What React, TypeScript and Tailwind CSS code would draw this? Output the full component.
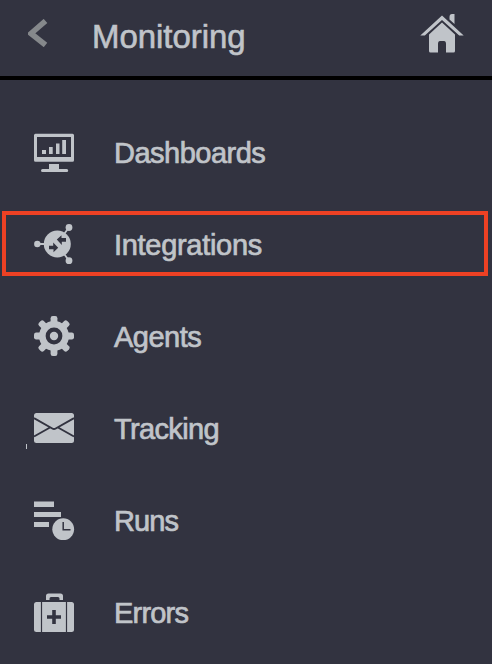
import React from "react";

const ICON = "block h-10 w-10 shrink-0 overflow-visible fill-[#c0c4c9]";
const DARK = "#323340";

function DashboardsIcon() {
  return (
    <svg viewBox="0 0 40 40" className={ICON}>
      <path fillRule="evenodd" d="M1.5 .7h37a1.5 1.5 0 0 1 1.5 1.5v25a1.5 1.5 0 0 1-1.5 1.5h-37A1.5 1.5 0 0 1 0 27.200v-25A1.500 1.500 0 0 1 1.500.7ZM3 4v20h34V4Z" />
      <path d="M8 17h4v4H8zM15 14h3.700v7H15zM22 10.500h3.500V21H22zM28.200 7H32v14h-3.800zM15 31h10v5h7.700a1.500 1.500 0 0 1 0 3H8.500a1.500 1.500 0 0 1 0-3H15z" />
    </svg>
  );
}

function IntegrationsIcon() {
  return (
    <svg viewBox="0 0 40 40" className={ICON}>
      <path d="M3.300 19H23L35 2.300M23 19l12 16.700" fill="none" stroke="#c0c4c9" strokeWidth="1.800" />
      <circle cx="23.300" cy="19" r="13.500" />
      <circle cx="3.300" cy="19" r="3.200" />
      <circle cx="35" cy="2.500" r="3.400" />
      <circle cx="35" cy="35.700" r="3.400" />
      <path fill={DARK} d="M15 20.700h4.200v-3.200l5 5.200-4.700 4.500v-2.900H15zM32 16.700h-4.200v3.300l-5-5.400 4.700-4.400v2.900H32z" />
    </svg>
  );
}

function AgentsIcon() {
  return (
    <svg viewBox="0 1 40 40" className={ICON}>
      {[0, 45, 90, 135].map((angle) => (
        <rect key={angle} x="16.600" y="0" width="6.800" height="40" rx="2.200" transform={`rotate(${angle} 20 20)`} />
      ))}
      <circle cx="20" cy="20" r="15" />
      <circle cx="20" cy="20" r="8.400" fill={DARK} />
      <circle cx="20" cy="20" r="4.200" />
    </svg>
  );
}

function TrackingIcon() {
  return (
    <svg viewBox="0 0 40 40" className={ICON}>
      <rect y="4" width="40" height="30" rx="2.500" />
      <path d="M0 9.200 18.300 19.500q1.700 1 3.400 0L40 9.200M0 27.500l16-9M40 27.500l-16-9" fill="none" stroke={DARK} strokeWidth="1.900" />
    </svg>
  );
}

function RunsIcon() {
  return (
    <svg viewBox="0 0 40 40" className={ICON}>
      <path d="M0 .5h20V6H0zM0 11h27v5H0zM0 21h15v5H0z" />
      <circle cx="29.200" cy="28.200" r="10.900" />
      <path d="M29.200 21v7.800h7.300" fill="none" stroke={DARK} strokeWidth="1.500" />
    </svg>
  );
}

function ErrorsIcon() {
  return (
    <svg viewBox="0 0 40 40" className={ICON}>
      <path d="M12 7V3q0-2.500 2.500-2.500h12Q29 .5 29 3v4h-3.500V5.500q0-1.500-1.500-1.500h-7q-1.500 0-1.500 1.500V7z" />
      <rect y="9" width="40" height="30" rx="2.500" />
      <path d="M7.500 9v30M32.500 9v30" stroke={DARK} strokeWidth="1.200" />
      <path d="M20 17v14M13 24h14" stroke={DARK} strokeWidth="3.600" />
    </svg>
  );
}

const items = [
  { label: "Dashboards", Icon: DashboardsIcon, tracking: "tracking-[-0.5px]" },
  { label: "Integrations", Icon: IntegrationsIcon, tracking: "tracking-[-0.3px]", selected: true },
  { label: "Agents", Icon: AgentsIcon, tracking: "tracking-[-0.5px]" },
  { label: "Tracking", Icon: TrackingIcon, tracking: "tracking-[-0.65px]", tick: true },
  { label: "Runs", Icon: RunsIcon, tracking: "tracking-[-0.9px]" },
  { label: "Errors", Icon: ErrorsIcon, tracking: "tracking-[-0.8px]" },
];

export default function App() {
  return (
    <div className="h-[664px] w-[492px] overflow-hidden bg-[#323340] font-['Liberation_Sans',Arial,sans-serif] text-[#c0c4c9]">
      <header className="flex h-20 items-center border-b-4 border-black pr-7 pl-7">
        <svg viewBox="0 0 20 28" className="-mt-2.5 h-7 w-5 shrink-0">
          <path d="M17.500 2 3 14.500l14.500 11.500" fill="none" stroke="#85888b" strokeWidth="5.600" />
        </svg>
        <h1 className="-mt-0.5 ml-11 grow text-[33px] leading-10 tracking-[-0.05px] [-webkit-text-stroke:0.6px_#c0c4c9]">Monitoring</h1>
        <svg viewBox="0 0 44 40" className="-mt-2 h-10 w-11 shrink-0 fill-[#c0c4c9]">
          <path d="M22 1.500 43.700 21.500h-4.500L22 5.900 4.800 21.500H.3zM29.500 3q0-3 2.500-3h2.500v10l-5-4.500z" />
          <path d="M22 8.500 35 20.500V37q0 1.500-1.500 1.500H26V30q0-3-2-3h-4q-2 0-2 3v8.500h-7.500Q9 38.500 9 37V20.500z" />
        </svg>
      </header>
      <nav className="pt-[27px]">
        {items.map(({ label, Icon, tracking, selected, tick }) => (
          <div key={label} className="relative flex h-[92px] items-center pl-[34px]">
            {selected && <div className="absolute top-3 left-0.5 h-[65px] w-[486px] border-4 border-[#ed4124]" />}
            {tick && <div className="absolute top-[61px] left-[26px] h-[5px] w-px bg-[#c0c4c9]" />}
            <Icon />
            <span className={`ml-10 text-[29px] leading-9 [-webkit-text-stroke:0.7px_#c0c4c9] ${tracking}`}>{label}</span>
          </div>
        ))}
      </nav>
    </div>
  );
}
